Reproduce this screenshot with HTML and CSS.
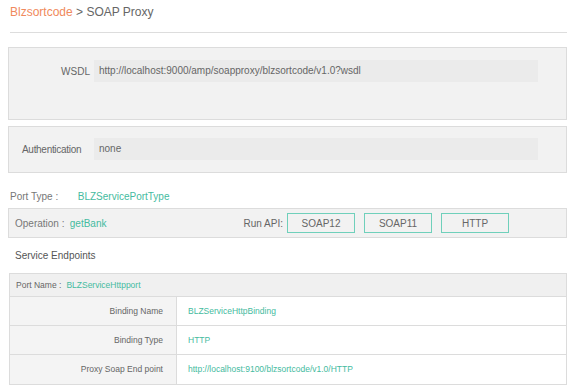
FILE: index.html
```html
<!DOCTYPE html>
<html lang="en">
<head>
  <meta charset="UTF-8">
  <meta name="viewport" content="width=device-width, initial-scale=1.0">
  <title>SOAP Proxy</title>
  <link rel="stylesheet" href="styles.css">
</head>
<body>
  <div class="page">
    <div class="crumb">
      <span class="crumb-link">Blzsortcode</span> &gt; SOAP Proxy
    </div>

    <div class="panel panel-wsdl">
      <div class="field">
        <label class="field-label">WSDL</label>
        <div class="field-value">http://localhost:9000/amp/soapproxy/blzsortcode/v1.0?wsdl</div>
      </div>
    </div>

    <div class="panel panel-auth">
      <div class="field">
        <label class="field-label field-label-left">Authentication</label>
        <div class="field-value">none</div>
      </div>
    </div>

    <div class="port-type">
      <span class="muted-label">Port Type :</span>
      <span class="teal">BLZServicePortType</span>
    </div>

    <div class="operation-bar">
      <div class="operation">
        <span class="muted-label">Operation :</span>
        <span class="teal">getBank</span>
      </div>
      <div class="run-api">
        <span class="run-label">Run API:</span>
        <button class="btn-run">SOAP12</button>
        <button class="btn-run">SOAP11</button>
        <button class="btn-run">HTTP</button>
      </div>
    </div>

    <div class="section-title">Service Endpoints</div>

    <div class="endpoints">
      <div class="endpoints-head">
        <span class="muted-label">Port Name :</span>
        <span class="teal">BLZServiceHttpport</span>
      </div>
      <div class="endpoint-row">
        <div class="endpoint-key">Binding Name</div>
        <div class="endpoint-val">BLZServiceHttpBinding</div>
      </div>
      <div class="endpoint-row">
        <div class="endpoint-key">Binding Type</div>
        <div class="endpoint-val">HTTP</div>
      </div>
      <div class="endpoint-row">
        <div class="endpoint-key">Proxy Soap End point</div>
        <div class="endpoint-val">http://localhost:9100/blzsortcode/v1.0/HTTP</div>
      </div>
    </div>
  </div>
</body>
</html>
```

FILE: styles.css
```css
* {
  margin: 0;
  padding: 0;
  box-sizing: border-box;
  font-family: 'Liberation Sans', Arial, sans-serif;
}

body {
  background-color: #fff;
  color: #666;
}

.page {
  padding: 0 9px 0 8px;
}

.crumb {
  margin: 0 0 0 2px;
  padding: 5px 0 13px;
  font-size: 12px;
  color: #666;
  border-bottom: 1px solid #ddd;
}

.crumb-link {
  color: #f08a5d;
}

.panel {
  background-color: #f2f2f2;
  border: 1px solid #dcdcdc;
}

.panel-wsdl {
  margin-top: 14px;
  height: 73px;
  padding: 12px 28px 0 0;
}

.panel-auth {
  margin-top: 6px;
  height: 47px;
  padding: 11px 28px 0 0;
}

.field {
  display: flex;
  align-items: center;
  height: 22px;
}

.field-label {
  width: 81px;
  text-align: right;
  font-size: 10px;
  color: #666;
}

.field-label-left {
  text-align: left;
  padding-left: 13px;
  letter-spacing: -0.3px;
}

.field-value {
  flex: 1;
  margin-left: 4px;
  height: 22px;
  line-height: 22px;
  padding-left: 5px;
  background-color: #ebebeb;
  font-size: 10px;
  color: #666;
}

.muted-label {
  color: #777;
  display: inline-block;
}

.teal {
  color: #45bba0;
}

.port-type {
  margin-top: 18px;
  padding-left: 2px;
  font-size: 10px;
  height: 12px;
  line-height: 12px;
}

.port-type .muted-label {
  width: 65px;
}

.operation-bar {
  margin-top: 5px;
  height: 30px;
  display: flex;
  justify-content: space-between;
  align-items: center;
  background-color: #f2f2f2;
  border: 1px solid #dcdcdc;
  padding: 0 57px 0 6px;
  font-size: 10px;
}

.operation .muted-label {
  width: 52px;
}

.run-api {
  display: flex;
  align-items: center;
}

.run-label {
  color: #666;
  margin-right: 4px;
}

.btn-run {
  width: 68px;
  height: 20px;
  margin-left: 9px;
  background-color: #f2f2f2;
  border: 1px solid #6fd0bb;
  font-family: 'Liberation Sans', Arial, sans-serif;
  font-size: 10px;
  color: #666;
}

.run-label + .btn-run {
  margin-left: 0;
}

.section-title {
  padding: 12px 0 0 7px;
  height: 35px;
  font-size: 10px;
  line-height: 12px;
  color: #555;
}

.endpoints {
  margin-left: 1px;
  border: 1px solid #dcdcdc;
  font-size: 8.5px;
}

.endpoints-head {
  height: 23px;
  line-height: 22px;
  padding-left: 6px;
  background-color: #f0f0f0;
  border-bottom: 1px solid #dcdcdc;
}

.endpoints-head .muted-label {
  width: 48px;
  color: #666;
}

.endpoint-row {
  display: flex;
  height: 29px;
  border-bottom: 1px solid #dcdcdc;
}

.endpoint-row:last-child {
  border-bottom: none;
}

.endpoint-key {
  width: 167px;
  padding-right: 13px;
  line-height: 28px;
  text-align: right;
  background-color: #f4f4f4;
  border-right: 1px solid #dcdcdc;
  color: #666;
}

.endpoint-val {
  flex: 1;
  padding-left: 11px;
  line-height: 28px;
  color: #45bba0;
}
```
